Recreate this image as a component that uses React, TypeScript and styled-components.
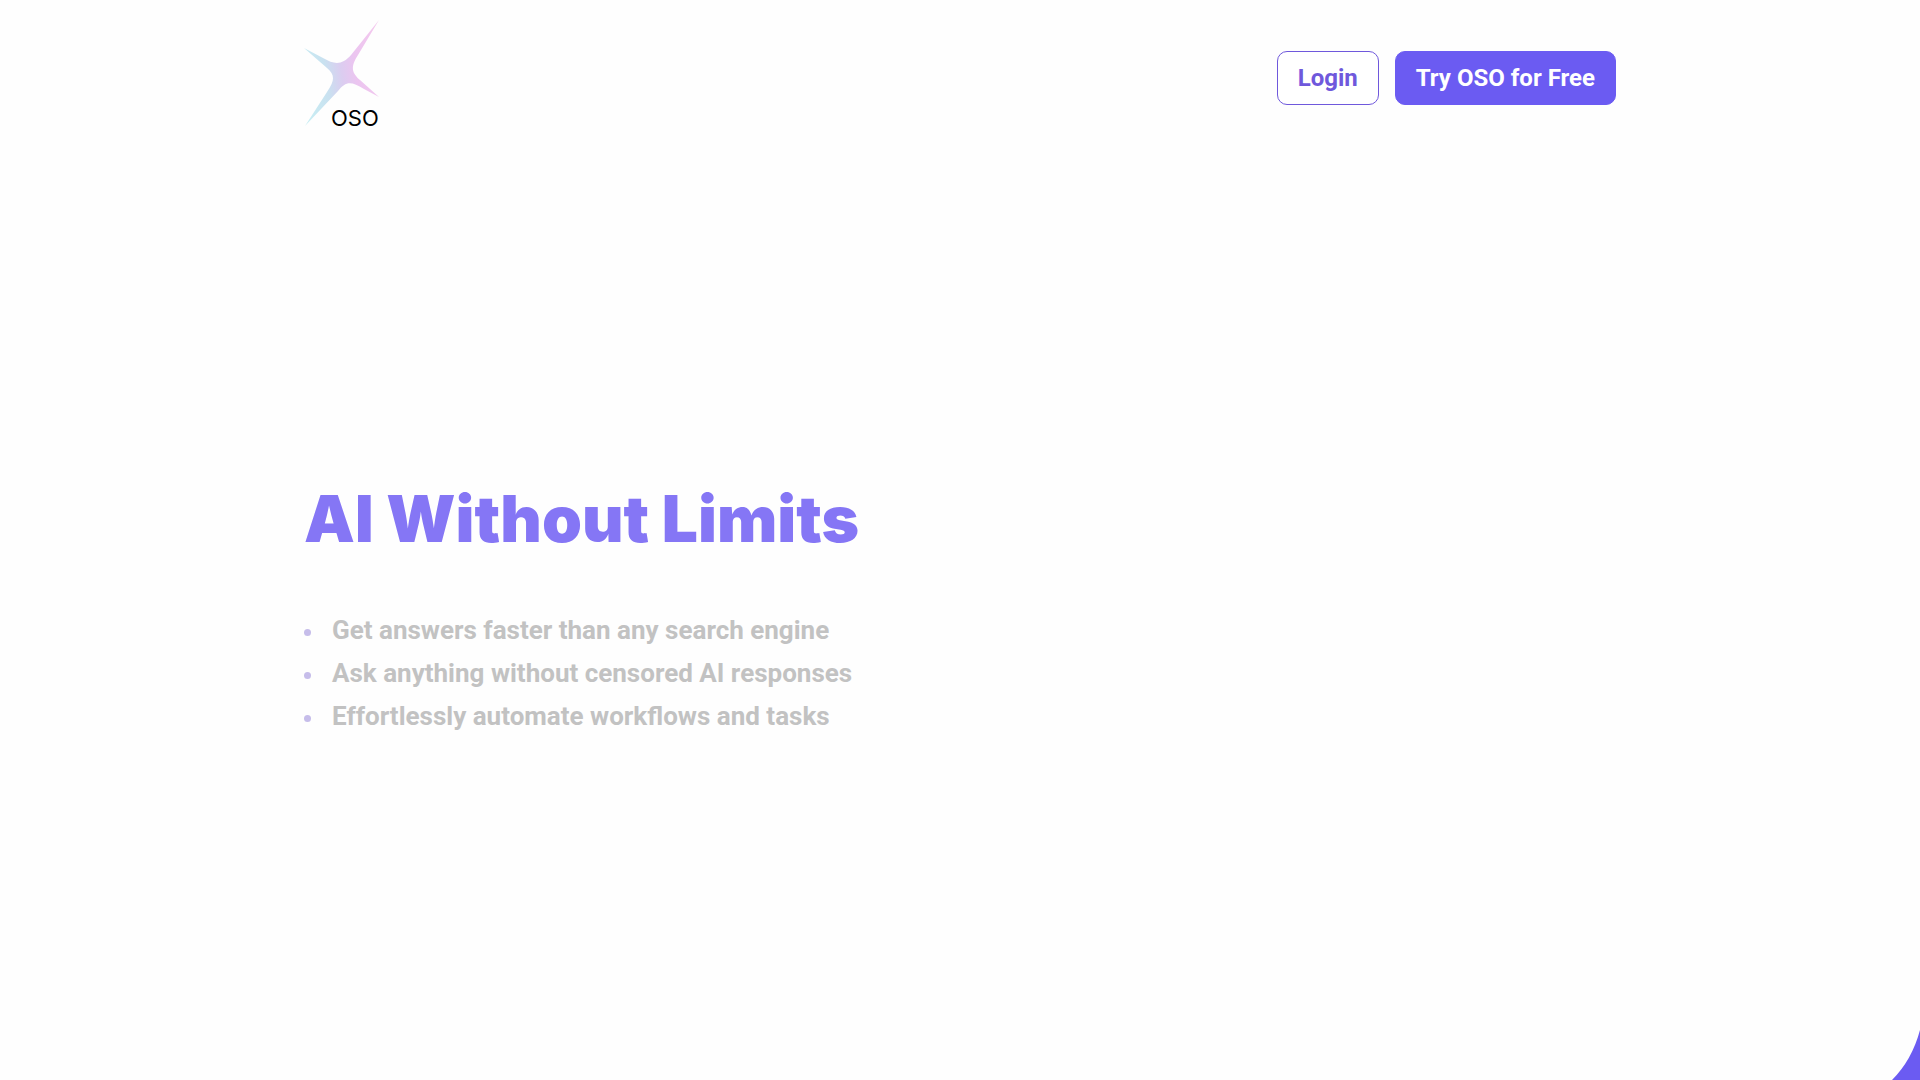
import React from "react";
import styled, { createGlobalStyle } from "styled-components";

const GlobalStyle = createGlobalStyle`
  * { box-sizing: border-box; }
  body { margin: 0; background: #fefefe; font-family: Roboto, sans-serif; }
`;

const Page = styled.div`
  position: relative;
  min-height: 100vh;
  display: flex;
  flex-direction: column;
  overflow: hidden;
`;

const Container = styled.div`
  width: 100%;
  max-width: 1360px;
  margin: 0 auto;
  padding: 0 24px;
`;

const Header = styled(Container).attrs({ as: "header" })`
  display: flex;
  align-items: center;
  justify-content: space-between;
  padding-top: 16px;
  padding-bottom: 16px;
`;

const LogoLink = styled.a`
  display: block;
  height: 124px;
  svg { display: block; }
`;

const Actions = styled.nav`
  display: flex;
  gap: 16px;
`;

const Button = styled.button<{ $primary?: boolean }>`
  height: 54px;
  padding: 0 20px;
  border: 1px solid ${(p) => (p.$primary ? "#6b5bf2" : "#6f58dc")};
  border-radius: 10px;
  background: ${(p) => (p.$primary ? "#6b5bf2" : "#ffffff")};
  color: ${(p) => (p.$primary ? "#ffffff" : "#6f58dc")};
  font: 700 24px/32px Roboto, sans-serif;
  cursor: pointer;
`;

const Hero = styled(Container).attrs({ as: "main" })`
  flex: 1;
  display: flex;
  flex-direction: column;
  justify-content: center;
  gap: 54px;
  padding-bottom: 16px;
`;

const Title = styled.h1`
  margin: 0;
  color: #8576f5;
  font: 900 64px/72px Inter, sans-serif;
`;

const Benefits = styled.ul`
  margin: 0;
  padding: 0;
  list-style: none;
`;

const Benefit = styled.li`
  display: flex;
  align-items: center;
  gap: 21px;
  color: #c2c2c2;
  font: 700 26px/43px Roboto, sans-serif;

  &::before {
    content: "";
    width: 7px;
    height: 7px;
    margin-top: 4px;
    border-radius: 50%;
    background: #c6bdea;
  }
`;

const Corner = styled.svg`
  position: absolute;
  right: 0;
  bottom: 0;
`;

const Logo = () => (
  <svg width="80" height="124" viewBox="0 0 80 124" role="img" aria-label="OSO">
    <defs>
      <linearGradient id="star" x1="0" y1="0.6" x2="1" y2="0.4">
        <stop offset="0" stopColor="#c8edf3" />
        <stop offset="0.3" stopColor="#c9e1f0" />
        <stop offset="0.5" stopColor="#dbcdf0" />
        <stop offset="0.68" stopColor="#ebc5f0" />
        <stop offset="1" stopColor="#f3c8ee" />
      </linearGradient>
    </defs>
    <path
      d="M75 4 L54 39 C46 51 48 57 56 64 L75 81 L60 73 C47 65 42 65 34 75 L1 110 L23 76 C31 64 31 59 23 52 L0 32 L19 42 C31 49 38 49 47 39 Z"
      fill="url(#star)"
    />
    <text x="27" y="110" fontFamily="Inter, sans-serif" fontSize="22" fill="#000000">OSO</text>
  </svg>
);

const benefits = [
  "Get answers faster than any search engine",
  "Ask anything without censored AI responses",
  "Effortlessly automate workflows and tasks",
];

export default function App() {
  return (
    <>
      <GlobalStyle />
      <Page>
        <Header>
          <LogoLink href="#"><Logo /></LogoLink>
          <Actions>
            <Button type="button">Login</Button>
            <Button type="button" $primary>Try OSO for Free</Button>
          </Actions>
        </Header>
        <Hero>
          <Title>AI Without Limits</Title>
          <Benefits>
            {benefits.map((text) => <Benefit key={text}>{text}</Benefit>)}
          </Benefits>
        </Hero>
        <Corner width="28" height="50" viewBox="0 0 28 50" aria-hidden="true">
          <path d="M28 0 Q20 30 0 50 H28 Z" fill="#6b5bf2" />
        </Corner>
      </Page>
    </>
  );
}
